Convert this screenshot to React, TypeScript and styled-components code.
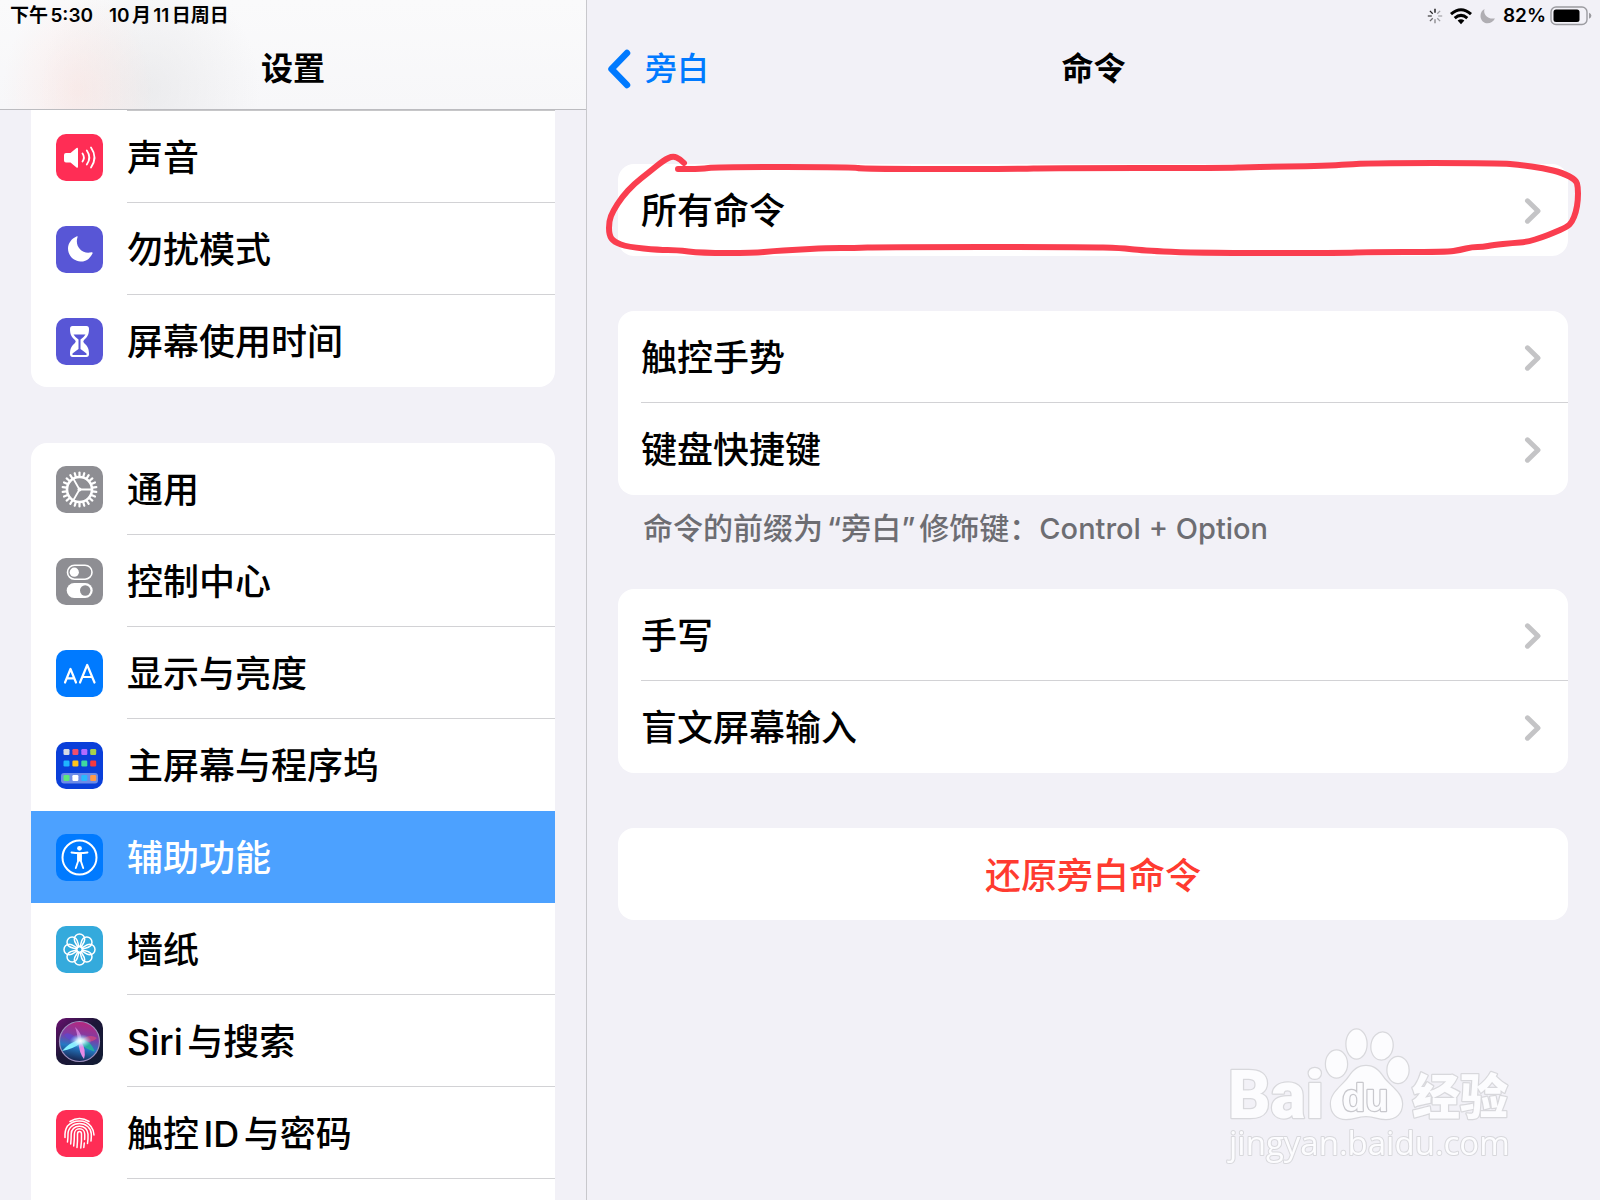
import React from "react";
import styled, { createGlobalStyle } from "styled-components";

const GlobalStyle = createGlobalStyle`
  *, *::before, *::after { box-sizing: border-box; }
  body {
    margin: 0;
    background: #f2f1f7;
    color: #000;
    font-family: Inter, "Noto Sans CJK SC", sans-serif;
    text-autospace: normal;
  }
  ul { list-style: none; margin: 0; padding: 0; }
  h1, h2, p { margin: 0; }
`;

const Screen = styled.div`
  display: flex;
  height: 100vh;
  overflow: hidden;
`;

const Sidebar = styled.aside`
  display: flex;
  flex-direction: column;
  flex: 0 0 587px;
  border-right: 1px solid #c8c8cc;
`;

const Detail = styled.main`
  display: flex;
  flex-direction: column;
  flex: 1;
  min-width: 0;
`;

const Header = styled.header<{ $frosted?: boolean }>`
  flex: none;
  height: 110px;
  border-bottom: 1px solid ${(p) => (p.$frosted ? "#bcbcc0" : "transparent")};
  background: ${(p) =>
    p.$frosted
      ? `radial-gradient(ellipse 75px 100px at 78px 90px, rgba(255, 220, 214, 0.4), rgba(255, 220, 214, 0)),
         radial-gradient(ellipse 110px 120px at 150px 90px, rgba(228, 228, 230, 0.6), rgba(228, 228, 230, 0)),
         linear-gradient(#fafafb, #f7f7f9)`
      : "transparent"};
`;

const StatusBar = styled.div<{ $end?: boolean }>`
  display: flex;
  align-items: center;
  justify-content: ${(p) => (p.$end ? "flex-end" : "flex-start")};
  gap: ${(p) => (p.$end ? "4px" : "16px")};
  height: 31px;
  padding: 0 8px 0 10px;
  font-size: 19px;
  line-height: 24px;
  font-weight: 600;
`;

const NavBar = styled.div`
  display: grid;
  grid-template-columns: 1fr auto 1fr;
  align-items: center;
  height: 76px;
  padding: 0 20px;
`;

const Title = styled.h1`
  grid-column: 2;
  font-size: 32px;
  line-height: 40px;
  font-weight: 600;
`;

const BackLink = styled.a`
  display: flex;
  align-items: center;
  gap: 14px;
  justify-self: start;
  color: #007aff;
  font-size: 32px;
  line-height: 40px;
  font-weight: 500;
  text-decoration: none;
`;

const SidebarBody = styled.nav`
  display: flex;
  flex-direction: column;
  flex: 1;
  gap: 56px;
  padding: 0 31px;
`;

const Card = styled.ul<{ $shape?: "top" | "bottom" }>`
  position: relative;
  flex: none;
  background: #fff;
  border-radius: ${(p) =>
    p.$shape === "top" ? "16px 16px 0 0" : p.$shape === "bottom" ? "0 0 16px 16px" : "16px"};
  ${(p) => (p.$shape === "top" ? "flex-grow: 1;" : "")}
`;

const TopRule = styled.li`
  height: 1px;
  margin-left: 96px;
  background: #c6c6c8;
`;

const SettingLink = styled.a<{ $selected?: boolean }>`
  display: flex;
  align-items: center;
  gap: 24px;
  height: 92px;
  padding-left: 25px;
  color: ${(p) => (p.$selected ? "#fff" : "#000")};
  background: ${(p) => (p.$selected ? "#4ca1ff" : "transparent")};
  text-decoration: none;
`;

const CommandLink = styled(SettingLink)`
  padding-left: 23px;
`;

const RowLabel = styled.span<{ $rule?: boolean }>`
  display: flex;
  flex: 1;
  align-items: center;
  justify-content: space-between;
  align-self: stretch;
  padding: 3px 26px 0 0;
  border-bottom: 1px solid ${(p) => (p.$rule ? "#d2d2d5" : "transparent")};
  font-size: 36px;
  line-height: 48px;
  font-weight: 500;
  white-space: nowrap;
`;

const Tile = styled.svg`
  flex: none;
  width: 47px;
  height: 47px;
`;

const DetailBody = styled.div`
  display: flex;
  flex-direction: column;
  gap: 55px;
  padding: 54px 32px 0 31px;
`;

const Group = styled.section`
  position: relative;
`;

const Footnote = styled.p`
  margin-bottom: -15px;
  padding: 13px 25px 0;
  color: #6d6d72;
  font-size: 30px;
  line-height: 40px;
  font-weight: 500;
`;

const Quoted = styled.span`
  padding: 0 4px;
`;

const Keys = styled.span`
  font-size: 29px;
`;

const ResetButton = styled.button`
  width: 100%;
  height: 92px;
  padding: 3px 0 0;
  border: 0;
  border-radius: 16px;
  background: #fff;
  color: #ff3b30;
  font: 500 36px/48px Inter, "Noto Sans CJK SC", sans-serif;
`;

const Marker = styled.svg`
  position: absolute;
  top: -14px;
  left: -18px;
  width: calc(100% + 40px);
  height: 112px;
  pointer-events: none;
`;

const Watermark = styled.svg`
  position: fixed;
  right: 76px;
  bottom: 26px;
  width: 304px;
  height: 154px;
  pointer-events: none;
`;

const w = "#fff";

const SoundIcon = () => (
  <Tile viewBox="0 0 47 47" aria-hidden>
    <rect width="47" height="47" rx="10" fill="#ff2d55" />
    <path d="M8 21q0-2 2-2h4.500l6-5q1.500-1 1.500 1v17.500q0 2-1.500 1l-6-5H10q-2 0-2-2z" fill={w} />
    <path d="M26.500 19.500q2.800 4 0 8M30.800 16.500q5 7 0 14M35 13.500q7 10 0 20" fill="none" stroke={w} strokeWidth="1.800" strokeLinecap="round" />
  </Tile>
);

const MoonIcon = () => (
  <Tile viewBox="0 0 47 47" aria-hidden>
    <rect width="47" height="47" rx="10" fill="#5856d6" />
    <path d="M20.500 10.500c.8-.5 1.400-.2 1 .8-3 9 4.500 17.500 14 15 1-.2 1.400.3 1 1.200C33.500 33.500 29 36 24.500 35.500 17.500 35 12 29.500 12 22.500c0-5 3.500-10 8.500-12z" fill={w} />
  </Tile>
);

const HourglassIcon = () => (
  <Tile viewBox="0 0 47 47" aria-hidden>
    <rect width="47" height="47" rx="10" fill="#5856d6" />
    <path d="M16.500 8h14q2.500 0 2.500 3c0 6-2 8.500-5 11q-1.500 1.500 0 3c3 2.500 5 5 5 11q0 3-2.500 3h-14q-2.500 0-2.500-3c0-6 2-8.500 5-11q1.500-1.500 0-3c-3-2.500-5-5-5-11q0-3 2.500-3z" fill={w} />
    <path d="M17.500 16.500h12q-1 2-5 5v9.500q3.500 2.500 6 4.500V37h-14v-1.500q2.500-2 6-4.500v-9.500q-4-3-5-5z" fill="#5856d6" />
  </Tile>
);

const GearIcon = () => (
  <Tile viewBox="0 0 47 47" aria-hidden>
    <rect width="47" height="47" rx="10" fill="#8e8e93" />
    <g stroke={w} fill="none">
      <circle cx="23.500" cy="23.500" r="12.500" strokeWidth="2.600" />
      {Array.from({ length: 22 }, (_, i) => (
        <path key={i} d="M23.500 10.500V6.500" strokeWidth="2.200" strokeLinecap="round" transform={`rotate(${(i * 360) / 22} 23.500 23.500)`} />
      ))}
      <path d="M23.500 23.500H36M23.500 23.500l-6.300-11M23.500 23.500l-6.300 11" strokeWidth="1.800" />
    </g>
    <circle cx="23.500" cy="23.500" r="2" fill={w} />
  </Tile>
);

const ControlsIcon = () => (
  <Tile viewBox="0 0 47 47" aria-hidden>
    <rect width="47" height="47" rx="10" fill="#8e8e93" />
    <rect x="11.500" y="7.200" width="24.500" height="14" rx="7" fill="none" stroke={w} strokeWidth="1.600" />
    <circle cx="18.300" cy="14.200" r="4.600" fill={w} />
    <rect x="10.700" y="25" width="26" height="15" rx="7.500" fill={w} />
    <circle cx="29.200" cy="32.500" r="5.200" fill="#8e8e93" />
  </Tile>
);

const DisplayIcon = () => (
  <Tile viewBox="0 0 47 47" aria-hidden>
    <rect width="47" height="47" rx="10" fill="#007aff" />
    <g fill="none" stroke={w} strokeWidth="2.200" strokeLinecap="round" strokeLinejoin="round">
      <path d="M9 32.500l5.500-13.500L20 32.500M11 28.300h7" />
      <path d="M24 32.500l7.200-17.500L38.500 32.500M26.500 27h9.500" />
    </g>
  </Tile>
);

const homeDots = [
  ["#d6d9e4", "#ef4f6f", "#b26bff", "#a6d24b"],
  ["#1fb4ff", "#ffc21c", "#3fd8a0", "#f5393f"],
  ["#5ce87a", "#ffffff", "#28b8ff", "#ff9a4a"],
];

const HomeIcon = () => (
  <Tile viewBox="0 0 47 47" aria-hidden>
    <rect width="47" height="47" rx="10" fill="#0a3fd9" />
    <rect x="5" y="31" width="37" height="10.500" rx="3" fill="#6c8be8" />
    {homeDots.map((row, r) =>
      row.map((color, c) => (
        <rect key={`${r}-${c}`} x={7.500 + c * 8.900} y={[7, 18.500, 33][r]} width="6" height="6" rx="1.200" fill={color} />
      )),
    )}
  </Tile>
);

const AccessIcon = () => (
  <Tile viewBox="0 0 47 47" aria-hidden>
    <rect width="47" height="47" rx="10" fill="#007aff" />
    <circle cx="23.500" cy="23.500" r="17" fill="none" stroke={w} strokeWidth="2" />
    <circle cx="23.500" cy="14.300" r="2.400" fill={w} />
    <path d="M15.500 18.500q8 1.300 16 0M22 19.500h3v7h-3zM22.500 26l-2.700 8M24.500 26l2.700 8" fill={w} stroke={w} strokeWidth="1.900" strokeLinecap="round" strokeLinejoin="round" />
  </Tile>
);

const WallpaperIcon = () => (
  <Tile viewBox="0 0 47 47" aria-hidden>
    <rect width="47" height="47" rx="10" fill="#34aadc" />
    <g fill="none" stroke={w} strokeWidth="1.500">
      {Array.from({ length: 8 }, (_, i) => (
        <path key={i} d="M21.800 20.800c-1.300-2.600-3.500-4.300-3.500-7.600a5.200 5.200 0 0 1 10.400 0c0 3.300-2.200 5-3.500 7.600z" transform={`rotate(${i * 45} 23.500 23.500)`} />
      ))}
      <circle cx="23.500" cy="23.500" r="3.200" />
    </g>
  </Tile>
);

const SiriIcon = () => (
  <Tile viewBox="0 0 47 47" aria-hidden>
    <defs>
      <linearGradient id="siriBack" x1="0" y1="0" x2="1" y2="1">
        <stop offset="0" stopColor="#6a1070" />
        <stop offset="0.450" stopColor="#1c1638" />
        <stop offset="1" stopColor="#101c33" />
      </linearGradient>
      <linearGradient id="siriOrb" x1="0.600" y1="0" x2="0.400" y2="1">
        <stop offset="0" stopColor="#b8267c" />
        <stop offset="0.400" stopColor="#7a3fa8" />
        <stop offset="0.650" stopColor="#2479c4" />
        <stop offset="1" stopColor="#16204a" />
      </linearGradient>
      <radialGradient id="siriGlow">
        <stop offset="0" stopColor="#fff" />
        <stop offset="0.350" stopColor="#d8f6ff" stopOpacity="0.850" />
        <stop offset="1" stopColor="#7ad0ff" stopOpacity="0" />
      </radialGradient>
    </defs>
    <rect width="47" height="47" rx="10" fill="url(#siriBack)" />
    <circle cx="23.500" cy="23.500" r="20" fill="url(#siriOrb)" stroke="#9d8fbe" strokeWidth="1.200" />
    <path d="M25 22q9-7 16-2-6 6-16 3z" fill="#d8487c" opacity="0.700" />
    <path d="M23 22Q12 12 8 17q5 7 15 6z" fill="#5a48d8" opacity="0.600" />
    <path d="M23 21.500q12 0 15.500 12Q29 31 23 25z" fill="#25b99a" opacity="0.850" />
    <path d="M25.500 24q5 8 2.500 17-5-6-5.500-17z" fill="#e88be6" />
    <path d="M25 21Q14 24 6 33q11-2 19-8z" fill="#86f0ff" />
    <path d="M22 23q-1-9-3-14 7 6 6.500 14z" fill="#e79af0" opacity="0.700" />
    <ellipse cx="24.500" cy="23" rx="11" ry="7" fill="url(#siriGlow)" />
  </Tile>
);

const TouchIdIcon = () => (
  <Tile viewBox="0 0 47 47" aria-hidden>
    <rect width="47" height="47" rx="10" fill="#ff2d55" />
    <g fill="none" stroke={w} strokeWidth="1.500" strokeLinecap="round">
      <path d="M14 11.500q9.500-6 19 0" />
      <path d="M9 27.500q-.5-7 2.500-11.500Q16 11 23.500 11T35 16.500q3 4 3 8.500" />
      <path d="M11.500 32q.5-4 .5-8c0-6 5-10.500 11.500-10.500S35 18 35.300 24q.2 3-.3 7" />
      <path d="M14.700 34q.5-5 .5-10c0-4.500 3.500-7.800 8.300-7.800s8.300 3.300 8.500 7.800q.2 5-.5 9.500" />
      <path d="M17.700 36q.7-6 .7-12c0-3 2.100-5.200 5.100-5.200s5.100 2.200 5.200 5.200q.1 3-.1 5.500" />
      <path d="M21 37.500q.7-7 .5-13.500 0-2.500 2-2.500t2 2.500q.3 7-.7 14M28.300 33l-.5 4.500" />
    </g>
  </Tile>
);

const Chevron = () => (
  <svg width="18" height="28" viewBox="0 0 18 28" aria-hidden>
    <path d="M3.500 3.800L14 14 3.500 24.200" fill="none" stroke="#c4c4c6" strokeWidth="5" strokeLinecap="round" strokeLinejoin="round" />
  </svg>
);

const BackChevron = () => (
  <svg width="24" height="40" viewBox="0 0 24 40" aria-hidden>
    <path d="M20 4L4.500 20 20 36" fill="none" stroke="#007aff" strokeWidth="6.500" strokeLinecap="round" strokeLinejoin="round" />
  </svg>
);

const Spinner = () => (
  <svg width="16" height="16" viewBox="0 0 16 16" aria-hidden>
    {[1, 0.350, 0.300, 0.350, 0.450, 0.550, 0.700, 0.850].map((o, i) => (
      <path key={i} d="M8 .8v4" stroke="#000" strokeWidth="1.300" opacity={o} transform={`rotate(${i * 45} 8 8)`} />
    ))}
  </svg>
);

const Wifi = () => (
  <svg width="28" height="18" viewBox="1 0 28 18" aria-hidden>
    <g fill="none" stroke="#000" strokeWidth="3">
      <path d="M5 7.200q10-9 20 0" />
      <path d="M8.700 11.200q6.300-5.600 12.600 0" />
    </g>
    <path d="M11.600 13.600q3.400-2.800 6.800 0L15 17.200z" fill="#000" />
  </svg>
);

const StatusMoon = () => (
  <svg width="20" height="16" viewBox="3 0 20 16" aria-hidden>
    <path d="M8.500 1C7 6 11 11.500 19 10.500c-1.500 3-4.500 4.800-7.500 4.800-4 0-7-3.300-7-7.300 0-3 1.500-5.700 4-7z" fill="#b0aeb3" />
  </svg>
);

const Battery = () => (
  <svg width="42" height="20" viewBox="0 0 42 20" aria-hidden>
    <rect x="1" y="1" width="36" height="17.500" rx="5" fill="none" stroke="#9b9ba0" strokeWidth="1.400" />
    <rect x="3.500" y="3.500" width="26" height="12.500" rx="2.500" fill="#000" />
    <path d="M39 6.800q2.400 1 2.400 3t-2.400 3z" fill="#9b9ba0" />
  </svg>
);

const strokePoints: [number, number][] = [
  [684, 163], [680, 159], [673, 156], [664, 160], [648, 173], [634, 184], [622, 197], [613, 211], [609, 221],
  [609, 235], [614, 242], [628, 247], [659, 250], [676, 250], [701, 253], [754, 253], [774, 251], [793, 250],
  [827, 248], [854, 248], [881, 247], [1084, 247], [1122, 248], [1137, 250], [1190, 253], [1350, 253],
  [1363, 252], [1447, 252], [1460, 250], [1472, 247], [1483, 247], [1493, 245], [1513, 243], [1527, 242],
  [1543, 237], [1553, 233], [1567, 227], [1572, 222], [1576, 212], [1578, 200], [1578, 187], [1576, 180],
  [1563, 173], [1543, 168], [1520, 165], [1500, 163], [1367, 163], [1327, 166], [1247, 167], [1230, 168],
  [1045, 168], [1022, 169], [862, 169], [854, 167], [716, 167], [701, 169], [678, 169],
];

// Quadratic curves through the midpoints give the line its hand-drawn smoothness.
const smooth = (pts: [number, number][]) => {
  let d = `M${pts[0][0]} ${pts[0][1]}`;
  for (let i = 1; i < pts.length - 1; i++) {
    const [x, y] = pts[i];
    const [nx, ny] = pts[i + 1];
    d += ` Q${x} ${y} ${(x + nx) / 2} ${(y + ny) / 2}`;
  }
  const last = pts[pts.length - 1];
  return `${d} L${last[0]} ${last[1]}`;
};

const sections = [
  {
    shape: "bottom" as const,
    rows: [
      { label: "声音", Icon: SoundIcon, rule: true },
      { label: "勿扰模式", Icon: MoonIcon, rule: true },
      { label: "屏幕使用时间", Icon: HourglassIcon },
    ],
  },
  {
    shape: "top" as const,
    rows: [
      { label: "通用", Icon: GearIcon, rule: true },
      { label: "控制中心", Icon: ControlsIcon, rule: true },
      { label: "显示与亮度", Icon: DisplayIcon, rule: true },
      { label: "主屏幕与程序坞", Icon: HomeIcon },
      { label: "辅助功能", Icon: AccessIcon, selected: true },
      { label: "墙纸", Icon: WallpaperIcon, rule: true },
      { label: "Siri与搜索", Icon: SiriIcon, rule: true },
      { label: "触控ID与密码", Icon: TouchIdIcon, rule: true },
    ],
  },
];

const CommandCard = ({ labels }: { labels: string[] }) => (
  <Card>
    {labels.map((label, i) => (
      <li key={label}>
        <CommandLink href="#">
          <RowLabel $rule={i < labels.length - 1}>
            {label}
            <Chevron />
          </RowLabel>
        </CommandLink>
      </li>
    ))}
  </Card>
);

export default function App() {
  return (
    <>
      <GlobalStyle />
      <Screen>
        <Sidebar>
          <Header $frosted>
            <StatusBar>
              <span>下午5:30</span>
              <span>10月11日周日</span>
            </StatusBar>
            <NavBar>
              <Title>设置</Title>
            </NavBar>
          </Header>
          <SidebarBody>
            {sections.map(({ shape, rows }) => (
              <Card key={shape} $shape={shape}>
                {shape === "bottom" && <TopRule aria-hidden />}
                {rows.map(({ label, Icon, rule, selected }: any) => (
                  <li key={label}>
                    <SettingLink href="#" $selected={selected} aria-current={selected ? "page" : undefined}>
                      <Icon />
                      <RowLabel $rule={rule}>{label}</RowLabel>
                    </SettingLink>
                  </li>
                ))}
              </Card>
            ))}
          </SidebarBody>
        </Sidebar>

        <Detail>
          <Header>
            <StatusBar $end>
              <Spinner />
              <Wifi />
              <StatusMoon />
              <span>82%</span>
              <Battery />
            </StatusBar>
            <NavBar>
              <BackLink href="#">
                <BackChevron />
                旁白
              </BackLink>
              <Title as="h2">命令</Title>
            </NavBar>
          </Header>
          <DetailBody>
            <Group>
              <CommandCard labels={["所有命令"]} />
              <Marker viewBox="600 150 990 112" preserveAspectRatio="none" aria-hidden>
                <path d={smooth(strokePoints)} fill="none" stroke="#fa3e4f" strokeWidth="6" strokeLinecap="round" strokeLinejoin="round" />
              </Marker>
            </Group>
            <Group>
              <CommandCard labels={["触控手势", "键盘快捷键"]} />
              <Footnote>
                命令的前缀为<Quoted>“旁白”</Quoted>修饰键：<Keys>Control + Option</Keys>
              </Footnote>
            </Group>
            <Group>
              <CommandCard labels={["手写", "盲文屏幕输入"]} />
            </Group>
            <ResetButton type="button">还原旁白命令</ResetButton>
          </DetailBody>
        </Detail>
      </Screen>

      <Watermark viewBox="1220 1020 304 154">
        <g fill="#fcfcfe" stroke="#d8d8dc" strokeWidth="2.500" paintOrder="stroke" strokeLinejoin="round">
          <text x="1228" y="1118" fontFamily="Roboto, sans-serif" fontWeight="900" fontSize="66">Bai</text>
          <ellipse cx="1336.500" cy="1064" rx="10.500" ry="13.500" />
          <ellipse cx="1356.500" cy="1044" rx="10" ry="14.500" />
          <ellipse cx="1382" cy="1046" rx="10.500" ry="13.500" transform="rotate(8 1382 1046)" />
          <ellipse cx="1398" cy="1070" rx="10.500" ry="13" />
          <path d="M1366 1066c8 0 12 4 17 11 6 9 19 15 19 27 0 9-6 15-16 15-8 0-12-3-20-3s-12 3-20 3c-9 0-15-6-15-15 0-12 12-18 18-27 5-7 9-11 17-11z" />
          <text x="1342" y="1111" fontFamily="Liberation Sans, sans-serif" fontWeight="700" fontSize="38" stroke="#c8c8cd">du</text>
          <text x="1412" y="1114" fontFamily="Noto Sans CJK SC, sans-serif" fontWeight="900" fontSize="48">经验</text>
          <text x="1229" y="1155" fontFamily="Open Sans, sans-serif" fontSize="33" strokeWidth="2">jingyan.baidu.com</text>
        </g>
      </Watermark>
    </>
  );
}
